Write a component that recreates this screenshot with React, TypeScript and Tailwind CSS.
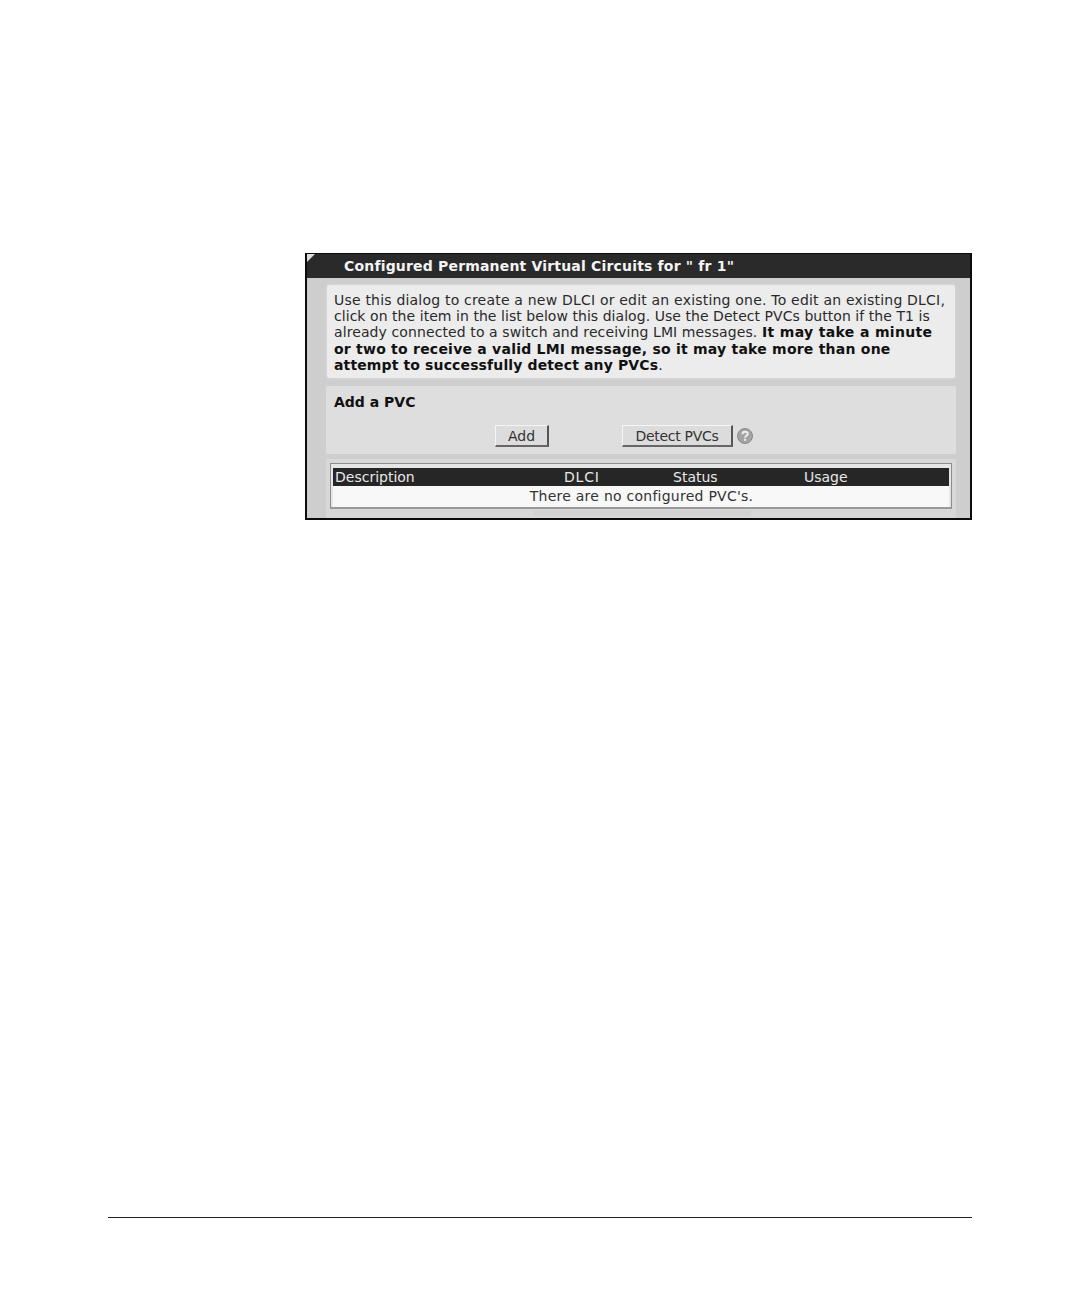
const button = 'h-[22px] pt-[1px] bg-[#dcdcdc] border border-t-[#f5f5f5] border-l-[#f5f5f5] border-r-2 border-b-2 border-r-[#555] border-b-[#666] flex items-center justify-center text-[#333]'

export default function App() {
  return (
    <div className="w-[1080px] h-[1296px] bg-white flex flex-col font-['DejaVu_Sans',sans-serif] text-[14px] text-[#222] overflow-hidden">
      <div className="ml-[305px] mt-[253px] w-[667px] h-[267px] border-2 border-t border-[#0c0c0c] bg-[#cecece] flex flex-col relative overflow-hidden">
        {/* title bar, the light notch sits in its corner */}
        <div className="h-[24px] bg-[#2a2a2a] shrink-0 pl-[37px] flex items-center text-[#f4f4f4] font-bold tracking-[0.18px] whitespace-nowrap">
          Configured Permanent Virtual Circuits for " fr 1"
        </div>
        <div className="absolute left-0 top-0 w-0 h-0 border-t-[8px] border-r-[8px] border-t-[#dedede] border-r-transparent" />

        <div className="mt-[7px] ml-[20px] mr-[15px] h-[93px] bg-[#ececec] rounded-[2px] pl-[7px] pt-[7px] leading-[16.2px] text-[#2a2a2a] whitespace-nowrap shadow-[0_0_3px_#e0e0e0]">
          <div className="tracking-[0.2px]">Use this dialog to create a new DLCI or edit an existing one. To edit an existing DLCI,</div>
          <div className="tracking-[0.05px]">click on the item in the list below this dialog. Use the Detect PVCs button if the T1 is</div>
          <div className="tracking-[0.1px]">
            already connected to a switch and receiving LMI messages. <b className="text-[#111] tracking-[0.34px]">It may take a minute</b>
          </div>
          <div>
            <b className="text-[#111] tracking-[0.23px]">or two to receive a valid LMI message, so it may take more than one</b>
          </div>
          <div>
            <b className="text-[#111] tracking-[0.13px]">attempt to successfully detect any PVCs</b>.
          </div>
        </div>

        <div className="mt-[8px] ml-[19px] mr-[14px] h-[68px] bg-[#dedede] rounded-[2px] flex flex-col shrink-0">
          <div className="pl-[8px] pt-[8px] font-bold leading-[17px] text-[#111]">Add a PVC</div>
          <div className="mt-[14px] flex items-center">
            <div className={`ml-[169px] w-[54px] ${button}`}>Add</div>
            <div className={`ml-[73px] w-[111px] tracking-[-0.3px] ${button}`}>Detect PVCs</div>
            <svg className="ml-[4px]" width="16" height="16" viewBox="0 0 16 16">
              <circle cx="8" cy="8" r="7.5" fill="#a3a3a3" stroke="#8a8a8a" />
              <path d="M5.4 6.2c0-1.6 1.2-2.5 2.7-2.5s2.6.9 2.6 2.2c0 1.9-2.6 1.9-2.6 3.8" fill="none" stroke="#eeeeee" strokeWidth="1.9" />
              <rect x="7.1" y="10.8" width="2" height="2" fill="#eeeeee" />
            </svg>
          </div>
        </div>

        <div className="mt-[5px] ml-[19px] mr-[14px] flex-1 bg-[#d8d8d8] pt-[4px] px-[4px] flex flex-col">
          <div className="h-[46px] shrink-0 border border-[#8c8c8c] border-b-2 border-b-[#999] bg-[#e6e6e6] pt-[4px] px-[2px] flex flex-col">
            <div className="h-[18px] bg-[#262626] text-[#e8e8e8] leading-[18px] flex shrink-0">
              <span className="w-[231px] pl-[2px]">Description</span>
              <span className="w-[109px] tracking-[0.8px]">DLCI</span>
              <span className="w-[131px]">Status</span>
              <span>Usage</span>
            </div>
            <div className="flex-1 text-center leading-[21px] tracking-[0.25px] text-[#333] bg-[#f8f8f8] pl-[1px] whitespace-nowrap">
              There are no configured PVC's.
            </div>
          </div>
          <div className="mt-[1px] ml-[203px] w-[218px] h-[6px] bg-[#d2d2d2]" />
        </div>
      </div>

      <div className="ml-[108px] mt-[697px] w-[864px] h-px bg-[#222]" />
    </div>
  )
}
